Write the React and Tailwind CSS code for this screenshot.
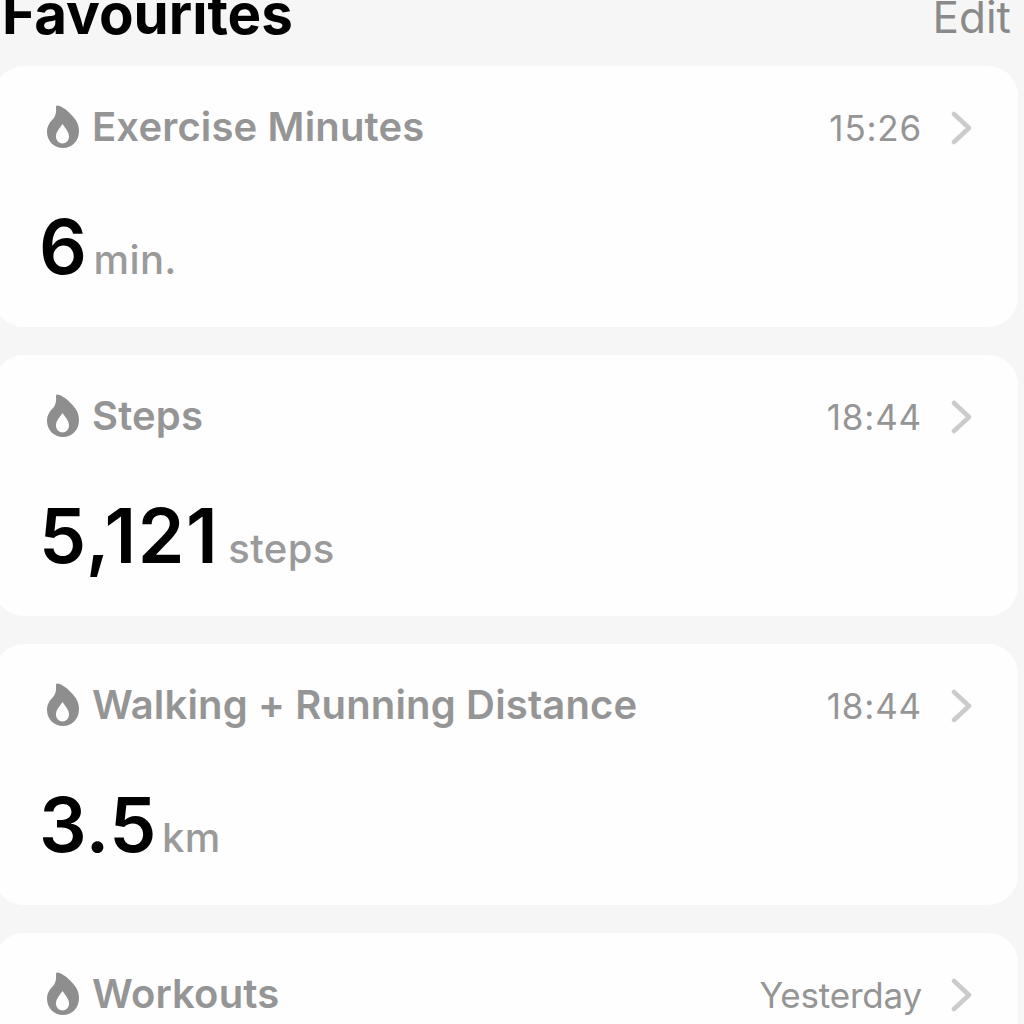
import React from "react";

const cards = [
  { title: "Exercise Minutes", time: "15:26", timeClass: "tracking-[0.8px]", value: "6", valueClass: "tracking-[0.5px]", unit: "min." },
  { title: "Steps", time: "18:44", timeClass: "tracking-[0.8px]", value: "5,121", valueClass: "tracking-[1.5px]", unit: "steps", unitClass: "ml-[9px]" },
  { title: "Walking + Running Distance", time: "18:44", timeClass: "tracking-[0.8px]", value: "3.5", valueClass: "tracking-[0.5px]", unit: "km", unitClass: "ml-[5px]" },
  { title: "Workouts", time: "Yesterday", timeClass: "tracking-[-0.2px]" },
];

const Flame = () => (
  <svg width="34" height="44" viewBox="0 0 34 44" className="shrink-0">
    <path
      fillRule="evenodd"
      fill="#8e8e8e"
      d="M11 0.5C15 1 20 4 25 9.5C30 14.5 33 19 33 26C33 36 26 43 17 43C8 43 1 36 1 27C1 21 4 17 7 14C9 12 10.5 8 10 3C10 1.5 10 0.5 11 0.5ZM16.5 19C13 24 10 27 10 31.5C10 35.5 13 38.5 16.5 38.5C20 38.5 23 35.5 23 31.5C23 27 20 24 16.5 19Z"
    />
  </svg>
);

const Chevron = () => (
  <svg width="22" height="34" viewBox="0 0 22 34" className="shrink-0">
    <path d="M3 3L18 17L3 31" fill="none" stroke="#cbcbcb" strokeWidth="4.5" strokeLinecap="round" strokeLinejoin="round" />
  </svg>
);

function Card({ title, time, timeClass, value, valueClass, unit, unitClass = "ml-[6px]" }) {
  return (
    <div className="h-[261px] shrink-0 rounded-[30px] bg-[#fefefe] pl-[52px] pr-[45px] pt-[38px]">
      <div className="flex h-[46px] items-center">
        <Flame />
        <span className="ml-[12px] text-[40px] font-semibold leading-[46px] tracking-[0.15px] text-[#959595]">{title}</span>
        <span className={`ml-auto mt-[2px] text-[35px] leading-[46px] text-[#959595] ${timeClass}`}>{time}</span>
        <span className="ml-[29px] mt-[2px]">
          <Chevron />
        </span>
      </div>
      {value && (
        <div className="-ml-[7px] mt-[55px] flex items-baseline">
          <span className={`text-[75px] font-semibold leading-[84px] text-black ${valueClass}`}>{value}</span>
          <span className={`text-[40px] font-medium leading-[46px] tracking-[0.4px] text-[#9a9a9a] ${unitClass}`}>{unit}</span>
        </div>
      )}
    </div>
  );
}

export default function App() {
  return (
    <div className="h-[1024px] w-[1024px] overflow-hidden bg-[#f6f6f6] font-['Inter','Liberation_Sans',sans-serif]">
      <div className="flex h-[66px] items-end justify-between pb-[24px] pl-[2px] pr-[13px]">
        <h1 className="text-[56.5px] font-bold leading-[56px] text-black">Favourites</h1>
        <span className="text-[44px] leading-[50px] text-[#8a8a8a]">Edit</span>
      </div>
      <div className="-ml-[6px] flex w-[1024px] flex-col gap-[28px]">
        {cards.map((c) => (
          <Card key={c.title} {...c} />
        ))}
      </div>
    </div>
  );
}
